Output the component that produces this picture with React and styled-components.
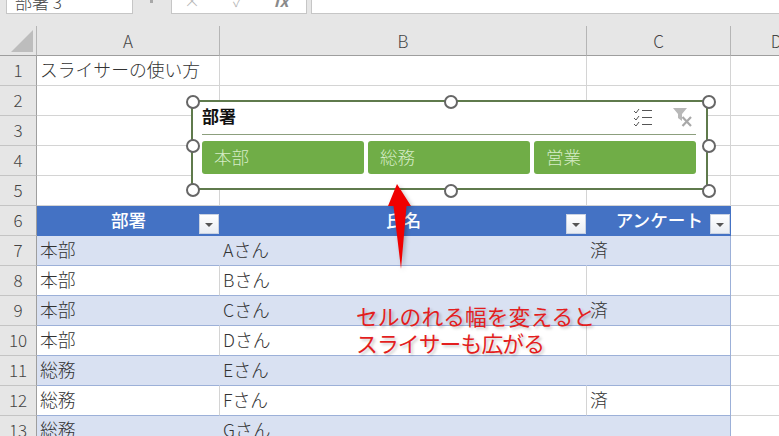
import React from 'react';
import styled, { createGlobalStyle } from 'styled-components';

const GlobalStyle = createGlobalStyle`
  html, body { margin: 0; padding: 0; background: #fff; }
  body { width: 779px; height: 436px; overflow: hidden; font-family: "Noto Sans CJK JP", "Liberation Sans", sans-serif; font-weight: 300; }
`;

const Page = styled.div`
  position: relative;
  width: 779px;
  height: 436px;
  overflow: hidden;
  background: #fff;
`;

const FormulaBar = styled.div`
  display: flex;
  height: 26px;
  padding-left: 6px;
  background: #e6e6e6;
  box-sizing: border-box;
`;

const NameBox = styled.div`
  width: 127px;
  height: 14px;
  background: #fff;
  border: 1px solid #c6c6c6;
  border-top: 0;
  box-sizing: border-box;
  font-size: 17px;
  line-height: 3px;
  color: #444;
  padding-left: 8px;
  overflow: hidden;
`;

const Grip = styled.div`
  width: 38px;
  display: flex;
  justify-content: center;
  &::before {
    content: '';
    width: 3px;
    height: 3px;
    margin-right: 2px;
    background: #a8a8a8;
  }
`;

const FxBox = styled.div`
  display: flex;
  width: 136px;
  height: 14px;
  background: #fff;
  border: 1px solid #c6c6c6;
  border-top: 0;
  box-sizing: border-box;
  margin-right: 4px;
  overflow: hidden;
  color: #b5b5b5;
  font-size: 16px;
  line-height: 1px;
  padding-left: 12px;
  gap: 33px;
`;

const FxLabel = styled.span`
  margin-left: -3px;
  color: #8a8a8a;
  font-style: italic;
  font-weight: 700;
`;

const Formula = styled.div`
  flex: 1;
  height: 14px;
  background: #fff;
  border-left: 1px solid #c6c6c6;
  border-bottom: 1px solid #c6c6c6;
  box-sizing: border-box;
`;

const Sheet = styled.div`
  display: grid;
  grid-template-columns: 37px 183px 367px 144px 92px;
  grid-template-rows: repeat(14, 30px);
`;

const Corner = styled.div`
  position: relative;
  background: #e6e6e6;
  border-right: 1px solid #b5b5b5;
  border-bottom: 1px solid #9e9e9e;
  box-sizing: border-box;
  &::after {
    content: '';
    position: absolute;
    right: 3px;
    bottom: 3px;
    border-style: solid;
    border-width: 0 0 22px 22px;
    border-color: transparent transparent #bdbdbd transparent;
  }
`;

const ColHead = styled.div`
  background: #e6e6e6;
  border-right: 1px solid #b5b5b5;
  border-bottom: 1px solid #9e9e9e;
  box-sizing: border-box;
  display: flex;
  align-items: center;
  justify-content: center;
  font-size: 17px;
  color: #444;
`;

const RowHead = styled.div`
  background: #e6e6e6;
  border-right: 1px solid #9e9e9e;
  border-bottom: 1px solid #c4c4c4;
  box-sizing: border-box;
  display: flex;
  align-items: center;
  justify-content: center;
  padding-bottom: 2px;
  font-size: 17px;
  color: #444;
`;

const Cell = styled.div`
  background: ${p => (p.$band ? '#d9e1f2' : '#fff')};
  border-right: 1px solid ${p => (p.$edge ? '#9cb0d8' : p.$band ? '#d9e1f2' : '#d4d4d4')};
  border-bottom: 1px solid ${p => (p.$rule ? '#9cb0d8' : '#d4d4d4')};
  box-sizing: border-box;
  display: flex;
  align-items: center;
  padding: 0 0 4px 3px;
  font-size: 17.8px;
  color: #333;
  white-space: nowrap;
`;

const HeaderCell = styled.div`
  position: relative;
  background: #4472c4;
  box-sizing: border-box;
  display: flex;
  align-items: center;
  justify-content: ${p => (p.$right ? 'flex-end' : 'center')};
  padding-right: ${p => (p.$right ? '28px' : '0')};
  padding-bottom: 4px;
  font-size: 17.6px;
  font-weight: 500;
  color: #fff;
  white-space: nowrap;
`;

const FilterButton = styled.span`
  position: absolute;
  right: 1px;
  bottom: 2px;
  width: 20px;
  height: 20px;
  box-sizing: border-box;
  background: linear-gradient(#fff, #e9edf3);
  border: 1px solid #c9d2e2;
  &::after {
    content: '';
    position: absolute;
    left: 5px;
    top: 8px;
    border-style: solid;
    border-width: 4px 4px 0 4px;
    border-color: #555 transparent transparent transparent;
  }
`;

const Slicer = styled.div`
  position: absolute;
  left: 191px;
  top: 100px;
  width: 517px;
  height: 90px;
  box-sizing: border-box;
  background: #fff;
  border: 2px solid #5f7a4c;
  padding: 7px 10px 0 9px;
  display: flex;
  flex-direction: column;
`;

const SlicerHead = styled.div`
  display: flex;
  align-items: center;
  justify-content: space-between;
  border-bottom: 1px solid #8c9f7d;
  box-sizing: content-box;
  height: 25px;
  flex: none;
  font-size: 17px;
  font-weight: 700;
  color: #111;
`;

const SlicerTitle = styled.span`
  position: relative;
  top: -6px;
`;

const SlicerIcons = styled.div`
  display: flex;
  align-self: flex-start;
  gap: 21px;
  margin-right: 4px;
  margin-top: -1px;
`;

const SlicerItems = styled.div`
  display: grid;
  grid-template-columns: repeat(3, 1fr);
  gap: 4px;
  margin-top: 6px;
`;

const SlicerItem = styled.div`
  height: 33px;
  background: #70ad47;
  border-radius: 3px;
  color: #d6ecc6;
  font-size: 17.5px;
  line-height: 31px;
  padding-left: 12px;
`;

const Handle = styled.span`
  position: absolute;
  left: ${p => p.$x}px;
  top: ${p => p.$y}px;
  width: 14px;
  height: 14px;
  box-sizing: border-box;
  border: 2.5px solid #666;
  border-radius: 50%;
  background: #fff;
  transform: translate(-50%, -50%);
`;

const Arrow = styled.svg`
  position: absolute;
  left: 385px;
  top: 180px;
  filter: drop-shadow(2px 2px 2px rgba(0, 0, 0, 0.25));
`;

const Note = styled.div`
  position: absolute;
  left: 356px;
  top: 302px;
  color: #e31e1e;
  font-size: 21.8px;
  font-weight: 400;
  line-height: 27px;
  white-space: nowrap;
  text-shadow: 2px 2px 3px rgba(0, 0, 0, 0.22);
`;

const NoteLine = styled.div`
  letter-spacing: ${p => (p.$tight ? '-0.9px' : '0')};
`;

const rows = [
  ['本部', 'Aさん', '済'],
  ['本部', 'Bさん', ''],
  ['本部', 'Cさん', '済'],
  ['本部', 'Dさん', ''],
  ['総務', 'Eさん', ''],
  ['総務', 'Fさん', '済'],
  ['総務', 'Gさん', ''],
];

const handles = [
  [193, 102], [451, 102], [709, 102],
  [193, 146], [709, 146],
  [193, 190], [451, 191], [709, 191],
];

function CheckListIcon() {
  return (
    <svg width="18" height="19" viewBox="0 0 18 19" fill="none" stroke="#555" strokeWidth="1">
      <path d="M0 3l2 2 3-4M0 10l2 2 3-4M0 16l2 2 3-4" />
      <path d="M8 2.5h10M8 9.5h10M8 16.5h10" />
    </svg>
  );
}

function ClearFilterIcon() {
  return (
    <svg width="19" height="19" viewBox="0 0 19 19" fill="none">
      <path d="M0 0h14L9 6v7L5 10V6z" fill="#b8b8b8" />
      <path d="M9.5 9l8.5 9M18 9l-8.5 9" stroke="#a8a8a8" strokeWidth="2.2" />
    </svg>
  );
}

function PlainRow({ num, children }) {
  return (
    <>
      <RowHead>{num}</RowHead>
      {children}
      <Cell />
    </>
  );
}

export default function App() {
  return (
    <Page>
      <GlobalStyle />
      <FormulaBar>
        <NameBox>部署 3</NameBox>
        <Grip />
        <FxBox>
          <span>×</span>
          <span>✓</span>
          <FxLabel>fx</FxLabel>
        </FxBox>
        <Formula />
      </FormulaBar>
      <Sheet>
        <Corner />
        <ColHead>A</ColHead>
        <ColHead>B</ColHead>
        <ColHead>C</ColHead>
        <ColHead>D</ColHead>

        <PlainRow num={1}>
          <Cell>スライサーの使い方</Cell><Cell /><Cell />
        </PlainRow>
        {[2, 3, 4, 5].map(n => (
          <PlainRow key={n} num={n}>
            <Cell /><Cell /><Cell />
          </PlainRow>
        ))}

        <RowHead>6</RowHead>
        <HeaderCell>部署<FilterButton /></HeaderCell>
        <HeaderCell>氏名<FilterButton /></HeaderCell>
        <HeaderCell $right>アンケート<FilterButton /></HeaderCell>
        <Cell />

        {rows.map((r, i) => {
          const band = i % 2 === 0;
          return (
            <PlainRow key={r[1]} num={i + 7}>
              <Cell $band={band} $rule>{r[0]}</Cell>
              <Cell $band={band} $rule>{r[1]}</Cell>
              <Cell $band={band} $rule $edge>{r[2]}</Cell>
            </PlainRow>
          );
        })}
      </Sheet>

      <Slicer>
        <SlicerHead>
          <SlicerTitle>部署</SlicerTitle>
          <SlicerIcons>
            <CheckListIcon />
            <ClearFilterIcon />
          </SlicerIcons>
        </SlicerHead>
        <SlicerItems>
          <SlicerItem>本部</SlicerItem>
          <SlicerItem>総務</SlicerItem>
          <SlicerItem>営業</SlicerItem>
        </SlicerItems>
      </Slicer>
      {handles.map(([x, y]) => <Handle key={`${x}-${y}`} $x={x} $y={y} />)}

      <Arrow width="30" height="92" viewBox="0 0 30 92">
        <path d="M12 4L3 26h5.5L16 89l5.5-63H26z" fill="#f00000" />
      </Arrow>
      <Note>
        <NoteLine>セルのれる幅を変えると</NoteLine>
        <NoteLine $tight>スライサーも広がる</NoteLine>
      </Note>
    </Page>
  );
}
